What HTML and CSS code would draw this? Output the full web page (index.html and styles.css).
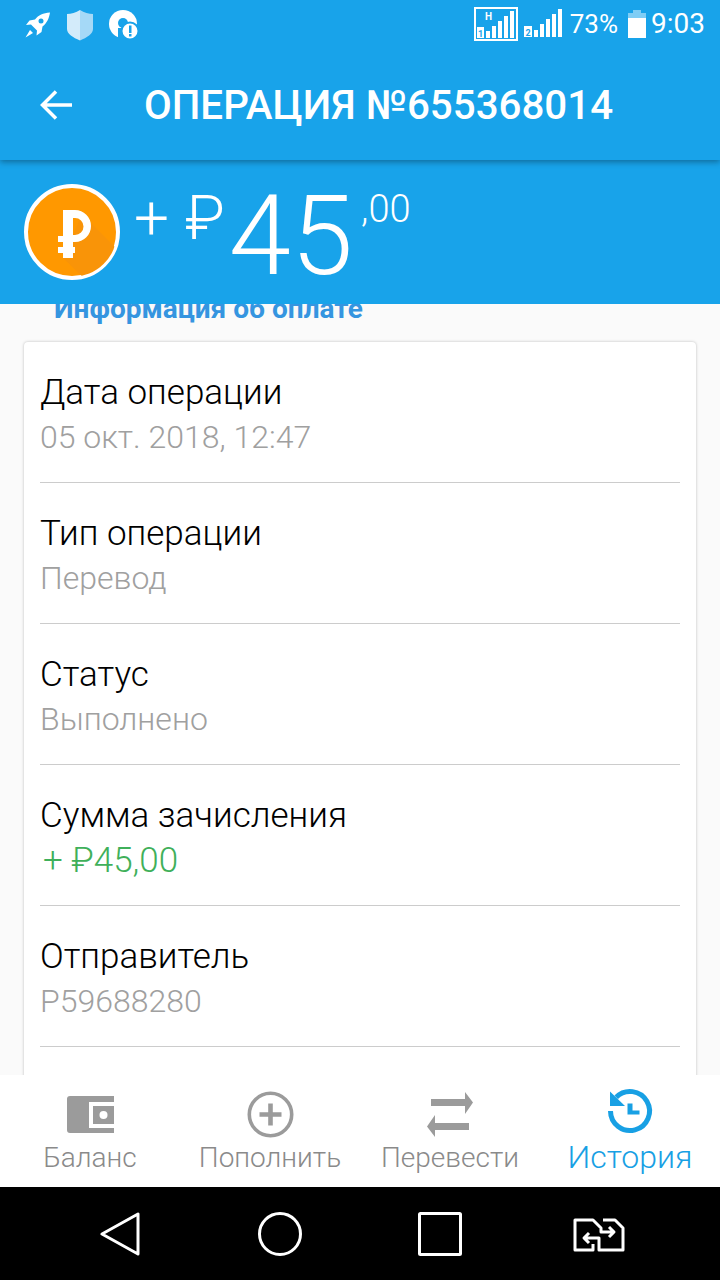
FILE: index.html
```html
<!DOCTYPE html>
<html lang="ru">
<head>
    <meta charset="UTF-8">
    <meta name="viewport" content="width=device-width, initial-scale=1.0">
    <title>Операция №655368014</title>
    <link rel="stylesheet" href="styles.css">
</head>
<body>
    <div class="screen">
        <div class="status-bar">
            <div class="status-left">
                <svg class="st-rocket" width="28" height="28" viewBox="0 0 28 28"><path d="M27 1.500C20 2 15.500 4 12 8.500L6.500 9.500 3 14l5-.5 6 6-.5 5 5-3.500 1-5.500C24 12 26 7.500 27 1.500z" fill="#fff"/><circle cx="18" cy="10" r="2.500" fill="#18a3ea"/><path d="M7 19l3 3-7.500 4.500z" fill="#fff"/></svg>
                <svg class="st-shield" width="28" height="32" viewBox="0 0 28 32"><path d="M14 1C10 3.500 5 5 1 5v15c0 5 6 8.500 13 11.500z" fill="#d3ebfa"/><path d="M14 1c4 2.500 9 4 13 4v15c0 5-6 8.500-13 11.500z" fill="#a5d9f7"/></svg>
                <svg class="st-alert" width="30" height="30" viewBox="0 0 30 30"><circle cx="14" cy="14" r="14" fill="#fff"/><circle cx="14" cy="13" r="5" fill="#18a3ea"/><path d="M9 28V18h10v10z" fill="#18a3ea"/><circle cx="21" cy="21" r="8.500" fill="#fff" stroke="#18a3ea" stroke-width="2"/><rect x="20" y="15.500" width="2.500" height="7.500" fill="#18a3ea"/><rect x="20" y="24" width="2.500" height="2.500" fill="#18a3ea"/></svg>
            </div>
            <div class="status-right">
                <svg class="st-sim" width="44" height="34" viewBox="0 0 44 34">
                    <rect x="1" y="1" width="42" height="32" fill="none" stroke="#fff" stroke-width="2"/>
                    <text x="11" y="13" class="sim-h">H</text>
                    <rect x="3" y="20" width="7" height="11" fill="#fff"/>
                    <text x="4" y="29.500" class="sim-num">1</text>
                    <rect x="12" y="24" width="4" height="7" fill="#fff"/>
                    <rect x="18" y="19" width="4" height="12" fill="#fff"/>
                    <rect x="24" y="14" width="4" height="17" fill="#fff"/>
                    <rect x="30" y="9" width="4" height="22" fill="#fff"/>
                    <rect x="36" y="4" width="4" height="27" fill="#fff"/>
                </svg>
                <svg class="st-sim2" width="38" height="30" viewBox="0 0 38 30">
                    <rect x="0" y="17" width="8" height="11" fill="#fff"/>
                    <text x="1.500" y="27" class="sim-num">2</text>
                    <rect x="10" y="21" width="4" height="7" fill="#fff"/>
                    <rect x="16" y="15" width="4" height="13" fill="#fff"/>
                    <rect x="22" y="10" width="4" height="18" fill="#fff"/>
                    <rect x="28" y="5" width="4" height="23" fill="#fff"/>
                    <rect x="34" y="0" width="4" height="28" fill="#fff"/>
                </svg>
                <span class="st-text st-percent">73%</span>
                <svg class="st-battery" width="18" height="28" viewBox="0 0 18 28"><path d="M5 0h8v3h5v6H0V3h5z" fill="#7fcdf5"/><rect y="8" width="18" height="20" fill="#fff"/></svg>
                <span class="st-text">9:03</span>
            </div>
        </div>

        <div class="toolbar">
            <svg class="back-icon" width="34" height="32" viewBox="0 0 34 32"><path d="M33 16H4M17 2.500L3.500 16 17 29.500" fill="none" stroke="#fff" stroke-width="3.500"/></svg>
            <div class="toolbar-title">ОПЕРАЦИЯ №655368014</div>
        </div>

        <div class="amount-bar">
            <svg class="coin" width="96" height="96" viewBox="0 0 96 96">
                <defs><clipPath id="coinClip"><circle cx="48" cy="48" r="45"/></clipPath></defs>
                <circle cx="48" cy="48" r="46" fill="#ff9800" stroke="#fff" stroke-width="4"/>
                <path d="M58 30L96 68V96H62L39 74z" fill="#f99408" clip-path="url(#coinClip)"/>
                <path fill-rule="evenodd" d="M39 26h12a16 16 0 0 1 0 32H49v5h2v6h-2v5H39v-5h-5v-6h5v-5h-5v-6h5zM49 34v17h2a8.500 8.500 0 0 0 0-17z" fill="#fff"/>
            </svg>
            <div class="amount">
                <span class="amount-sign">+</span>
                <span class="amount-cur">₽</span>
                <span class="amount-int">45</span>
                <span class="amount-frac">,00</span>
            </div>
        </div>

        <div class="content">
            <div class="section-title">Информация об оплате</div>
            <div class="card">
                <div class="row">
                    <div class="row-label">Дата операции</div>
                    <div class="row-value">05 окт. 2018, 12:47</div>
                </div>
                <div class="row">
                    <div class="row-label">Тип операции</div>
                    <div class="row-value">Перевод</div>
                </div>
                <div class="row">
                    <div class="row-label">Статус</div>
                    <div class="row-value">Выполнено</div>
                </div>
                <div class="row">
                    <div class="row-label">Сумма зачисления</div>
                    <div class="row-value green">+ ₽45,00</div>
                </div>
                <div class="row">
                    <div class="row-label">Отправитель</div>
                    <div class="row-value">P59688280</div>
                </div>
            </div>
        </div>

        <div class="tabbar">
            <div class="tab">
                <svg width="48" height="48" viewBox="0 0 48 48"><path d="M4 5H48V11H23V37H48V42H4a3 3 0 0 1-3-3V8a3 3 0 0 1 3-3z" fill="#9b9b9b"/><path d="M48 15V33H27V15z" fill="#9b9b9b"/><circle cx="37.500" cy="24" r="4" fill="#fff"/></svg>
                <span class="tab-label">Баланс</span>
            </div>
            <div class="tab">
                <svg width="48" height="48" viewBox="0 0 48 48"><circle cx="24.500" cy="23.500" r="21.200" fill="none" stroke="#9b9b9b" stroke-width="3.600"/><path d="M24.500 12.500v22M13.500 23.500h22" stroke="#9b9b9b" stroke-width="4.600"/></svg>
                <span class="tab-label">Пополнить</span>
            </div>
            <div class="tab">
                <svg width="48" height="48" viewBox="0 0 48 48"><path d="M5 8H39V1L47 11.500 39 23V15H5z" fill="#9b9b9b"/><path d="M43 32H9V24L1 35.500 9 46V39H43z" fill="#9b9b9b"/></svg>
                <span class="tab-label">Перевести</span>
            </div>
            <div class="tab active">
                <svg width="48" height="48" viewBox="0 0 48 48"><path d="M10.200 6.200A19.500 19.500 0 1 1 4.500 20" fill="none" stroke="#18a0e4" stroke-width="5"/><path d="M4 .5V15H19z" fill="#18a0e4"/><path d="M21.500 12.500h5v7h7v4h-12z" fill="#18a0e4"/></svg>
                <span class="tab-label">История</span>
            </div>
        </div>

        <div class="navbar">
            <svg width="40" height="44" viewBox="0 0 40 44"><path d="M38 2v40L2 22z" fill="none" stroke="#fff" stroke-width="3" stroke-linejoin="round"/></svg>
            <svg width="44" height="44" viewBox="0 0 44 44"><circle cx="22" cy="22" r="20.500" fill="none" stroke="#fff" stroke-width="3"/></svg>
            <svg width="44" height="44" viewBox="0 0 44 44"><rect x="1.500" y="1.500" width="41" height="41" fill="none" stroke="#fff" stroke-width="3" rx="1"/></svg>
            <svg class="nav-multi" width="52" height="34" viewBox="0 0 52 34"><path d="M20 26V32H2V2H20L28 10V14H40M36 9l5 5-5 5M30 2H42L50 10V32H26V20H12M16 15l-5 5 5 5" fill="none" stroke="#fff" stroke-width="3" stroke-linejoin="round"/></svg>
        </div>
    </div>
</body>
</html>
```

FILE: styles.css
```css
* {
    box-sizing: border-box;
}
html, body {
    margin: 0;
    padding: 0;
    background-color: #fafafa;
    font-family: Roboto, "Noto Sans", sans-serif;
}
.screen {
    width: 720px;
    height: 1280px;
    display: flex;
    flex-direction: column;
    overflow: hidden;
}
.status-bar {
    height: 50px;
    flex: none;
    background-color: #18a3ea;
    display: flex;
    justify-content: space-between;
    align-items: center;
    padding: 0 15px 0 23px;
    color: #fff;
    position: relative;
    z-index: 3;
}
.status-left {
    display: flex;
    align-items: center;
    gap: 15px;
}
.status-right {
    display: flex;
    align-items: center;
    margin-top: -2px;
}
.st-sim2 {
    margin-left: 6px;
}
.st-text {
    font-size: 28px;
    line-height: 34px;
}
.st-percent {
    font-size: 26px;
    margin-left: 8px;
    margin-right: 10px;
}
.st-battery {
    margin-right: 5px;
}
.sim-h {
    font: bold 10px Roboto, sans-serif;
    fill: #fff;
}
.sim-num {
    font: bold 9px Roboto, sans-serif;
    fill: #18a3ea;
}
.toolbar {
    height: 110px;
    flex: none;
    background-color: #18a3ea;
    display: flex;
    align-items: center;
    padding-left: 39px;
    color: #fff;
    position: relative;
    z-index: 2;
    box-shadow: 0 2px 6px rgba(0, 0, 0, 0.35);
}
.toolbar-title {
    margin-left: 71px;
    font-size: 40.3px;
    font-weight: 500;
    white-space: nowrap;
}
.amount-bar {
    height: 144px;
    flex: none;
    background-color: #18a3ea;
    display: flex;
    align-items: flex-start;
    padding: 24px 0 0 24px;
    color: #fff;
    position: relative;
    z-index: 1;
}
.amount {
    display: flex;
    align-items: flex-start;
    font-weight: 300;
    margin-left: 14px;
}
.amount-sign, .amount-cur {
    font-size: 62px;
    line-height: 60px;
    margin-top: 4px;
}
.amount-cur {
    margin-left: 16px;
}
.amount-int {
    font-size: 112px;
    line-height: 112px;
    margin-top: -4px;
    margin-left: 4px;
}
.amount-frac {
    font-size: 38px;
    line-height: 40px;
    margin-top: 5px;
    margin-left: 8px;
}
.content {
    flex: 1;
    min-height: 0;
    overflow: hidden;
    padding: 0 24px;
    background-color: #fafafa;
}
.section-title {
    font-size: 28px;
    font-weight: 700;
    line-height: 30px;
    margin: -10px 0 18px 30px;
    color: #3595e0;
}
.card {
    background-color: #fff;
    border-radius: 4px;
    padding: 0 16px 60px;
    box-shadow: 0 0 3px rgba(0, 0, 0, 0.25);
}
.row {
    height: 141px;
    padding-top: 30px;
    border-bottom: 1px solid #ccc;
}
.row-label {
    font-size: 35px;
    line-height: 42px;
    font-weight: 300;
    color: #000;
}
.row-value {
    font-size: 32px;
    line-height: 42px;
    margin-top: 2px;
    font-weight: 300;
    color: #a0a0a0;
}
.row-value.green {
    font-size: 35px;
    margin-top: 3px;
    color: #3fb05a;
    padding-left: 3px;
}
.tabbar {
    height: 112px;
    flex: none;
    background-color: #fff;
    display: grid;
    grid-template-columns: repeat(4, 180px);
    position: relative;
    z-index: 1;
}
.tab {
    display: flex;
    flex-direction: column;
    align-items: center;
    padding-top: 16px;
}
.tab svg {
    overflow: visible;
}
.tab-label {
    font-size: 28px;
    line-height: 36px;
    margin-top: 1px;
    font-weight: 300;
    color: #8a8a8a;
    white-space: nowrap;
}
.tab.active .tab-label {
    font-size: 32px;
    margin-top: 0;
    color: #18a0e4;
}
.navbar {
    height: 93px;
    flex: none;
    background-color: #000;
    display: grid;
    grid-template-columns: repeat(4, 160px);
    padding: 0 40px;
    justify-items: center;
    align-items: center;
}
.nav-multi {
    margin-left: -3px;
    margin-top: 2px;
}
```
